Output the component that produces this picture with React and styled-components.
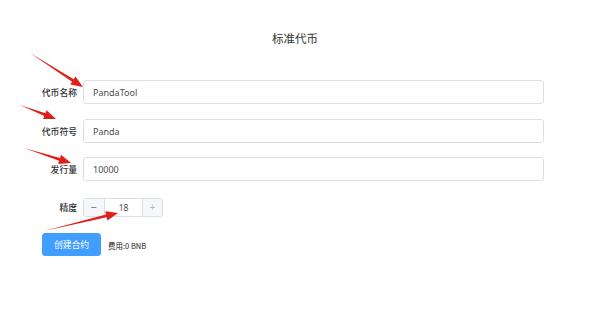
import React from "react";
import styled, { createGlobalStyle } from "styled-components";

const GlobalStyle = createGlobalStyle`
  html, body {
    margin: 0;
    background: #fff;
    font-family: "Noto Sans CJK SC", "Noto Sans", "Liberation Sans", sans-serif;
  }
`;

const arrows = [
  [30, 53, 83, 87],
  [20, 105, 56, 119],
  [24, 148, 71, 163],
  [44, 231, 118, 213],
];

function arrowPoints([x1, y1, x2, y2]) {
  const dx = x2 - x1;
  const dy = y2 - y1;
  const len = Math.hypot(dx, dy);
  const ux = dx / len;
  const uy = dy / len;
  const nx = -uy;
  const ny = ux;
  const head = 12;
  const bx = x2 - ux * head;
  const by = y2 - uy * head;
  const shaft = 1.5;
  const wing = 4.8;
  const pts = [
    [x1, y1],
    [bx + nx * shaft, by + ny * shaft],
    [bx + nx * wing, by + ny * wing],
    [x2, y2],
    [bx - nx * wing, by - ny * wing],
    [bx - nx * shaft, by - ny * shaft],
  ];
  return pts.map((p) => p.map((v) => v.toFixed(1)).join(",")).join(" ");
}

export default function App() {
  return (
    <>
      <GlobalStyle />
      <Page>
        <Title>标准代币</Title>
        <Form>
          <Row>
            <Label>代币名称</Label>
            <TextInput defaultValue="PandaTool" />
          </Row>
          <Row>
            <Label>代币符号</Label>
            <TextInput defaultValue="Panda" />
          </Row>
          <Row $top={14}>
            <Label>发行量</Label>
            <TextInput defaultValue="10000" />
          </Row>
          <Row $top={17}>
            <Label>精度</Label>
            <Stepper>
              <StepButton>−</StepButton>
              <StepValue>18</StepValue>
              <StepButton $right>+</StepButton>
            </Stepper>
          </Row>
          <Actions>
            <CreateButton>创建合约</CreateButton>
            <Fee>费用:0 BNB</Fee>
          </Actions>
        </Form>
        <Overlay width="600" height="318" viewBox="0 0 600 318">
          {arrows.map((a, i) => (
            <polygon key={i} points={arrowPoints(a)} fill="#e0201b" />
          ))}
        </Overlay>
      </Page>
    </>
  );
}

const Page = styled.div`
  position: relative;
  width: 600px;
  height: 318px;
  padding-top: 30px;
  box-sizing: border-box;
`;

const Title = styled.h2`
  margin: 0;
  text-align: center;
  width: 590px;
  font-size: 11.5px;
  line-height: 16px;
  font-weight: 400;
  color: #303133;
`;

const Form = styled.div`
  display: flex;
  flex-direction: column;
  margin-top: 34px;
`;

const Row = styled.div`
  display: flex;
  align-items: center;
  gap: 6px;
  margin-top: ${(p) => (p.$top ?? 15)}px;
  &:first-child {
    margin-top: 0;
  }
`;

const Label = styled.label`
  width: 77px;
  text-align: right;
  font-size: 8.8px;
  font-weight: 500;
  color: #303133;
`;

const TextInput = styled.input`
  width: 461px;
  height: 24px;
  box-sizing: border-box;
  border: 1px solid #dcdfe6;
  border-radius: 3px;
  padding: 0 9px;
  font-family: "Noto Sans", "Liberation Sans", sans-serif;
  font-size: 9px;
  color: #4a4c50;
  outline: none;
`;

const Stepper = styled.div`
  display: grid;
  grid-template-columns: 21px 1fr 20px;
  width: 80px;
  height: 19px;
  box-sizing: border-box;
  border: 1px solid #dcdfe6;
  border-radius: 3px;
  overflow: hidden;
`;

const StepButton = styled.span`
  display: flex;
  align-items: center;
  justify-content: center;
  background: #f5f7fa;
  color: ${(p) => (p.$right ? "#b4b8bf" : "#606266")};
  font-family: "Liberation Sans", sans-serif;
  font-size: 10px;
  border-right: ${(p) => (p.$right ? "none" : "1px solid #dcdfe6")};
  border-left: ${(p) => (p.$right ? "1px solid #dcdfe6" : "none")};
`;

const StepValue = styled.span`
  display: flex;
  align-items: center;
  justify-content: center;
  font-family: "Noto Sans", "Liberation Sans", sans-serif;
  font-size: 8.5px;
  color: #4a4c50;
`;

const Actions = styled.div`
  display: flex;
  align-items: center;
  gap: 7px;
  margin: 16px 0 0 42px;
`;

const CreateButton = styled.button`
  width: 59px;
  height: 23px;
  border: 1px solid #409eff;
  border-radius: 3px;
  background: #409eff;
  color: #fff;
  font-family: "Noto Sans CJK SC", sans-serif;
  font-size: 8.8px;
  padding: 0;
`;

const Fee = styled.span`
  font-size: 7.5px;
  font-weight: 400;
  color: #222;
  margin-top: 2px;
`;

const Overlay = styled.svg`
  position: absolute;
  left: 0;
  top: 0;
  pointer-events: none;
`;
